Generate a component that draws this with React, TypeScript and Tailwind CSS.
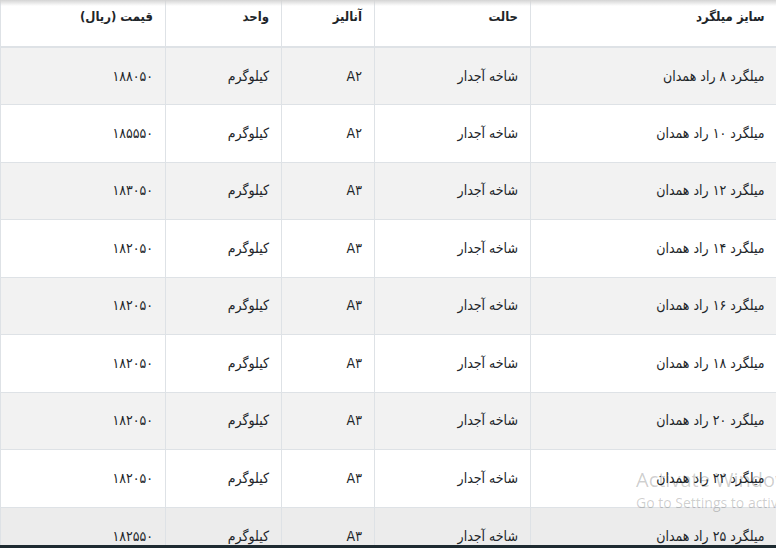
const rows = [
  { size: "میلگرد ۸ راد همدان", state: "شاخه آجدار", grade: "A۲", unit: "کیلوگرم", price: "۱۸۸۰۵۰" },
  { size: "میلگرد ۱۰ راد همدان", state: "شاخه آجدار", grade: "A۲", unit: "کیلوگرم", price: "۱۸۵۵۵۰" },
  { size: "میلگرد ۱۲ راد همدان", state: "شاخه آجدار", grade: "A۳", unit: "کیلوگرم", price: "۱۸۳۰۵۰" },
  { size: "میلگرد ۱۴ راد همدان", state: "شاخه آجدار", grade: "A۳", unit: "کیلوگرم", price: "۱۸۲۰۵۰" },
  { size: "میلگرد ۱۶ راد همدان", state: "شاخه آجدار", grade: "A۳", unit: "کیلوگرم", price: "۱۸۲۰۵۰" },
  { size: "میلگرد ۱۸ راد همدان", state: "شاخه آجدار", grade: "A۳", unit: "کیلوگرم", price: "۱۸۲۰۵۰" },
  { size: "میلگرد ۲۰ راد همدان", state: "شاخه آجدار", grade: "A۳", unit: "کیلوگرم", price: "۱۸۲۰۵۰" },
  { size: "میلگرد ۲۲ راد همدان", state: "شاخه آجدار", grade: "A۳", unit: "کیلوگرم", price: "۱۸۲۰۵۰" },
  { size: "میلگرد ۲۵ راد همدان", state: "شاخه آجدار", grade: "A۳", unit: "کیلوگرم", price: "۱۸۲۵۵۰" },
];

const cell = "border-l border-[#dee2e6] px-3 text-right align-middle";

export default function App() {
  return (
    <div className="relative h-[548px] w-[776px] overflow-hidden bg-white font-['DejaVu_Sans_Condensed','DejaVu_Sans',sans-serif] text-[14px] text-[#212529] [font-stretch:condensed]">
      <div className="pointer-events-none absolute inset-x-0 top-0 z-10 h-[6px] bg-gradient-to-b from-[#d4d4d4] to-transparent" />
      <table dir="rtl" className="w-[776px] table-fixed border-collapse">
        <colgroup>
          <col className="w-[246px]" />
          <col className="w-[156px]" />
          <col className="w-[93px]" />
          <col className="w-[116px]" />
          <col className="w-[165px]" />
        </colgroup>
        <thead>
          <tr className="h-[47px] border-b-2 border-[#dee2e6]">
            {["سایز میلگرد", "حالت", "آنالیز", "واحد", "قیمت (ریال)"].map((h) => (
              <th
                key={h}
                className="border-l border-[#dee2e6] px-3 pt-[7px] text-right align-top text-[13px] font-bold"
              >
                {h}
              </th>
            ))}
          </tr>
        </thead>
        <tbody>
          {rows.map((r, i) => (
            <tr
              key={i}
              className={
                i === 8
                  ? "h-[57.5px] border-t border-[#dee2e6] bg-[#ececec]"
                  : i % 2 === 0
                    ? "h-[57.5px] border-t border-[#dee2e6] bg-[#f2f2f2]"
                    : "h-[57.5px] border-t border-[#dee2e6] bg-white"
              }
            >
              <td className={cell}>{r.size}</td>
              <td className={cell}>{r.state}</td>
              <td className={cell}>{r.grade}</td>
              <td className={cell}>{r.unit}</td>
              <td className={cell}>{r.price}</td>
            </tr>
          ))}
        </tbody>
      </table>
      <div className="pointer-events-none absolute left-[636px] top-[467px] z-20 whitespace-nowrap font-['Open_Sans',sans-serif] text-[#000]/20 [font-stretch:normal]">
        <div className="text-[20px] leading-[26px]">Activate Windows</div>
        <div className="text-[14px] leading-[20px]">Go to Settings to activate Windows.</div>
      </div>
      <div className="absolute inset-x-0 bottom-0 z-30 h-[3px] bg-[#1e2b31]" />
    </div>
  );
}
